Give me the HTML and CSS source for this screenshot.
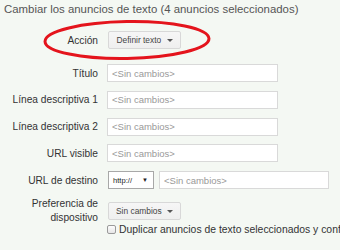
FILE: index.html
```html
<!DOCTYPE html>
<html lang="es">
<head>
  <meta charset="UTF-8">
  <title>Cambiar los anuncios de texto</title>
  <link rel="stylesheet" href="styles.css">
</head>
<body>

  <div class="panel">
    <h1 class="title">Cambiar los anuncios de texto (4 anuncios seleccionados)</h1>

    <div class="row row-action">
      <span class="label">Acción</span>
      <button type="button" class="btn">Definir texto <span class="caret"></span></button>
      <svg class="circle" width="172" height="46" viewBox="0 0 172 46">
        <ellipse cx="86" cy="22" rx="82" ry="18.5" transform="rotate(-1 86 22)" />
      </svg>
    </div>

    <div class="row">
      <label class="label" for="titulo">Título</label>
      <input type="text" id="titulo" class="field" placeholder="<Sin cambios>">
    </div>
    <div class="row">
      <label class="label" for="linea1">Línea descriptiva 1</label>
      <input type="text" id="linea1" class="field" placeholder="<Sin cambios>">
    </div>
    <div class="row">
      <label class="label" for="linea2">Línea descriptiva 2</label>
      <input type="text" id="linea2" class="field" placeholder="<Sin cambios>">
    </div>
    <div class="row">
      <label class="label" for="visible">URL visible</label>
      <input type="text" id="visible" class="field" placeholder="<Sin cambios>">
    </div>
    <div class="row">
      <label class="label" for="destino">URL de destino</label>
      <div class="select">http:// <span class="arrow">▼</span></div>
      <input type="text" id="destino" class="field field-wide" placeholder="<Sin cambios>">
    </div>

    <div class="row row-device">
      <span class="label label-two">Preferencia de<br>dispositivo</span>
      <button type="button" class="btn">Sin cambios <span class="caret"></span></button>
    </div>

    <div class="row row-check">
      <span class="label"></span>
      <span class="check"></span>
      <span class="check-text">Duplicar anuncios de texto seleccionados y configurar los cambios</span>
    </div>
  </div>

</body>
</html>
```

FILE: styles.css
```css
body {
  margin: 0;
  background: #f4f8f3;
  font-family: "Liberation Sans", Arial, sans-serif;
  color: #333;
  overflow: hidden;
}
.panel {
  width: 340px;
  height: 250px;
  overflow: hidden;
  white-space: nowrap;
}
.title {
  margin: 0;
  padding: 2px 0 0 4px;
  font-size: 11.4px;
  font-weight: normal;
  line-height: 14px;
  color: #555;
}
.row {
  display: flex;
  align-items: center;
  height: 18px;
  margin-bottom: 8.75px;
}
.row-action {
  position: relative;
  margin-top: 15px;
  margin-bottom: 15px;
}
.label {
  width: 98px;
  flex-shrink: 0;
  margin-right: 9px;
  text-align: right;
  font-size: 10.2px;
  color: #333;
}
.label-two {
  line-height: 14px;
}
.btn {
  width: 73px;
  height: 18px;
  padding: 0;
  margin-left: 1px;
  background: linear-gradient(#f6f6f6, #efefef);
  border: 1px solid #d8d8d8;
  border-radius: 2px;
  font-family: "Liberation Sans", Arial, sans-serif;
  font-size: 8.4px;
  color: #444;
}
.caret {
  display: inline-block;
  width: 0;
  height: 0;
  margin-left: 3px;
  vertical-align: 1px;
  border-left: 3px solid transparent;
  border-right: 3px solid transparent;
  border-top: 3px solid #555;
}
.circle {
  position: absolute;
  left: 41px;
  top: -13px;
  fill: none;
  stroke: #e4141c;
  stroke-width: 3;
}
.field {
  box-sizing: border-box;
  width: 171px;
  height: 18px;
  margin: 0;
  padding: 0 4px;
  background: #fff;
  border: 1px solid #d9d9d9;
  font-family: "Liberation Sans", Arial, sans-serif;
  font-size: 9.5px;
  color: #333;
}
.field::placeholder {
  color: #999;
}
.field-wide {
  width: 170px;
  margin-left: 5px;
}
.select {
  box-sizing: border-box;
  width: 46px;
  height: 18px;
  margin-left: 1px;
  padding: 0 0 0 4px;
  display: flex;
  align-items: center;
  justify-content: space-between;
  background: #fff;
  border: 1px solid #a8a8a8;
  font-size: 7.6px;
  color: #222;
}
.arrow {
  font-size: 6px;
  padding-right: 5px;
}
.row-device {
  height: 26px;
  margin-bottom: 0;
}
.row-check {
  height: 12px;
}
.check {
  box-sizing: border-box;
  width: 9px;
  height: 9px;
  flex-shrink: 0;
  border: 1px solid #9a9a9a;
  border-radius: 2px;
  background: linear-gradient(#fdfdfd, #e6e6e6);
}
.check-text {
  margin-left: 3px;
  font-size: 10.4px;
  color: #333;
}
```
